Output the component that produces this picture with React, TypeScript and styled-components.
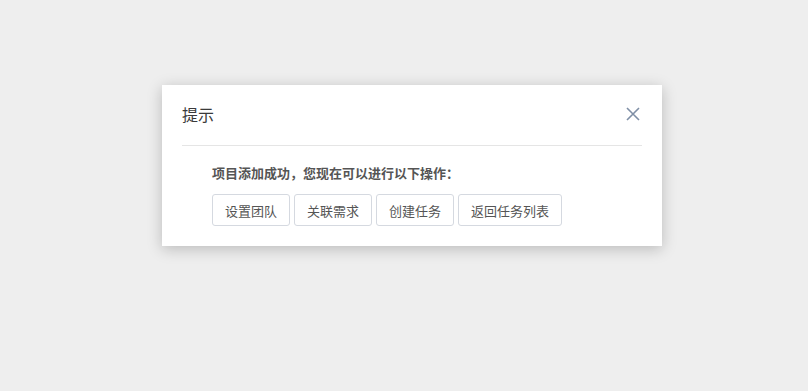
import React from 'react';

import styled, { createGlobalStyle } from 'styled-components';

const GlobalStyle = createGlobalStyle`
  html, body {
    margin: 0;
    padding: 0;
    background: #eeeeee;
    font-family: "Noto Sans CJK SC", "Noto Sans", sans-serif;
  }
`;

const actions = ['设置团队', '关联需求', '创建任务', '返回任务列表'];

export default function App() {
  return (
    <>
      <GlobalStyle />
      <StyledPage>
        <StyledDialog>
          <StyledHeader>
            <StyledTitle>提示</StyledTitle>
            <StyledClose aria-label="关闭">
              <svg width="14" height="14" viewBox="0 0 14 14">
                <path
                  d="M1 1 L13 13 M13 1 L1 13"
                  stroke="#7f8fa6"
                  strokeWidth="1.6"
                  fill="none"
                />
              </svg>
            </StyledClose>
          </StyledHeader>
          <StyledBody>
            <StyledMessage>项目添加成功，您现在可以进行以下操作：</StyledMessage>
            <StyledActions>
              {actions.map((label) => (
                <StyledButton key={label}>{label}</StyledButton>
              ))}
            </StyledActions>
          </StyledBody>
        </StyledDialog>
      </StyledPage>
    </>
  );
}

const StyledPage = styled.div`
  width: 808px;
  height: 391px;
  box-sizing: border-box;
  padding: 85px 0 0 162px;
`;

const StyledDialog = styled.div`
  width: 500px;
  background: #ffffff;
  box-shadow: 0 3px 14px rgba(0, 0, 0, 0.22);
`;

const StyledHeader = styled.div`
  height: 60px;
  margin: 0 20px;
  display: flex;
  align-items: center;
  justify-content: space-between;
  border-bottom: 1px solid #e5e5e5;
`;

const StyledTitle = styled.div`
  font-size: 16px;
  color: #3a3a3a;
  margin-bottom: 3px;
`;

const StyledClose = styled.button`
  border: none;
  background: none;
  padding: 0;
  margin: 0 2px 2px 0;
  display: flex;
  cursor: pointer;
`;

const StyledBody = styled.div`
  padding: 17px 20px 20px 50px;
`;

const StyledMessage = styled.div`
  font-size: 13px;
  line-height: 20px;
  font-weight: bold;
  color: #555555;
`;

const StyledActions = styled.div`
  display: flex;
  gap: 4px;
  margin-top: 11px;
`;

const StyledButton = styled.button`
  height: 32px;
  padding: 0 12px;
  font-family: inherit;
  font-size: 13px;
  color: #555555;
  background: #ffffff;
  border: 1px solid #d5d9e0;
  border-radius: 3px;
  cursor: pointer;
`;
